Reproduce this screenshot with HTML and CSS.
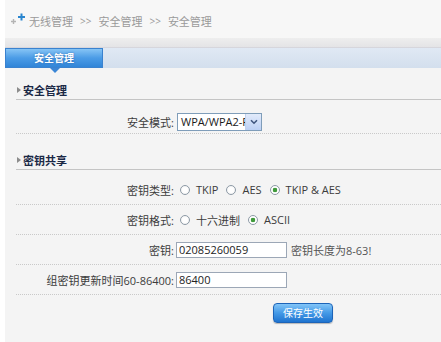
FILE: index.html
```html
<!DOCTYPE html>
<html lang="zh-CN">
<head>
<meta charset="utf-8">
<title>安全管理</title>
<link rel="stylesheet" href="styles.css">
</head>
<body>
<div class="page">
  <div class="crumb">
    <svg class="crumb-icon" width="18" height="14" viewBox="0 0 18 14">
      <path d="M1 9.5h5M3.5 7v5" stroke="#b4b4b4" stroke-width="1.4"/>
      <path d="M8 5h7M11.5 1.5v7" stroke="#2a86cf" stroke-width="2"/>
    </svg>
    <span>无线管理</span><span class="sep">&gt;&gt;</span><span>安全管理</span><span class="sep">&gt;&gt;</span><span>安全管理</span>
  </div>
  <div class="band"></div>
  <div class="tabs"><div class="tab">安全管理</div></div>
  <div class="content">
    <div class="sec-head">安全管理</div>
    <div class="sec-body sec-first">
      <div class="row row-short">
        <div class="lbl">安全模式:</div>
        <div class="fld">
          <div class="select">
            <span class="select-text">WPA/WPA2-PSK</span>
            <span class="select-btn">
              <svg width="8" height="6" viewBox="0 0 8 6"><path d="M1 1.2l3 3 3-3" fill="none" stroke="#3f557e" stroke-width="1.6"/></svg>
            </span>
          </div>
        </div>
      </div>
    </div>
    <div class="sec-head sec-gap">密钥共享</div>
    <div class="sec-body sec-second">
      <div class="row">
        <div class="lbl">密钥类型:</div>
        <div class="fld">
          <label class="opt"><input type="radio" name="t" class="radio">TKIP</label>
          <label class="opt"><input type="radio" name="t" class="radio">AES</label>
          <label class="opt"><input type="radio" name="t" class="radio" checked>TKIP &amp; AES</label>
        </div>
      </div>
      <div class="row">
        <div class="lbl">密钥格式:</div>
        <div class="fld">
          <label class="opt"><input type="radio" name="f" class="radio">十六进制</label>
          <label class="opt"><input type="radio" name="f" class="radio" checked>ASCII</label>
        </div>
      </div>
      <div class="row">
        <div class="lbl">密钥:</div>
        <div class="fld"><input class="txt" type="text" value="02085260059"><span class="hint">密钥长度为8-63!</span></div>
      </div>
      <div class="row">
        <div class="lbl">组密钥更新时间60-86400:</div>
        <div class="fld"><input class="txt" type="text" value="86400"></div>
      </div>
      <div class="actions">
        <div></div>
        <div><button class="btn" type="button">保存生效</button></div>
      </div>
    </div>
  </div>
</div>
</body>
</html>
```

FILE: styles.css
```css
html, body {
  margin: 0;
  padding: 0;
  background: #ffffff;
}
body {
  font-family: "Open Sans", "Noto Sans CJK SC", sans-serif;
  font-size: 11px;
  color: #3a3a3a;
}
.page {
  margin-left: 5px;
  height: 342px;
  display: flex;
  flex-direction: column;
}
.crumb {
  height: 38px;
  box-sizing: border-box;
  padding: 4px 0 0 5px;
  background: #f7f7f7;
  display: flex;
  align-items: center;
  color: #9a9a9a;
  white-space: nowrap;
}
.crumb-icon {
  margin-right: 1px;
  margin-top: -4px;
}
.sep {
  font-size: 10px;
  margin: 0 7px;
}
.band {
  height: 9px;
  background: linear-gradient(#eeeeee, #e4e4e6);
  border-bottom: 1px solid #d6d6dc;
}
.tabs {
  height: 20px;
  background: linear-gradient(#e0e9f4, #d3dfed);
  display: flex;
}
.tab {
  position: relative;
  width: 98px;
  box-sizing: border-box;
  height: 20px;
  line-height: 19px;
  text-align: center;
  color: #ffffff;
  font-weight: bold;
  font-size: 10px;
  background: linear-gradient(#86c4f5, #4b9ce6 50%, #3185d8);
  border: 1px solid #3a82cf;
  text-shadow: 0 0 2px rgba(20, 70, 140, 0.6);
}
.tab::after {
  content: "";
  position: absolute;
  left: 44px;
  top: 19px;
  border-left: 5px solid transparent;
  border-right: 5px solid transparent;
  border-top: 5px solid #3a86d6;
}
.content {
  flex: 1;
  background: #f4f4f4;
  padding: 12px 0 0 11px;
}
.sec-head {
  height: 19px;
  border-bottom: 1px solid #c4c4c4;
  display: flex;
  align-items: center;
  padding-left: 1px;
  font-weight: bold;
  color: #1b2946;
}
.sec-head::before {
  content: "";
  width: 0;
  height: 0;
  border-left: 4px solid #8c8c8c;
  border-top: 3px solid transparent;
  border-bottom: 3px solid transparent;
  margin-right: 2px;
}
.sec-gap {
  margin-top: 16px;
}
.sec-first {
  padding-top: 11px;
}
.sec-second {
  padding-top: 5px;
}
.row, .actions {
  display: grid;
  grid-template-columns: 158px 1fr;
  column-gap: 3px;
  align-items: center;
}
.row {
  height: 29px;
  border-bottom: 1px dotted #c9c9c9;
}
.row-short {
  height: 22px;
}
.lbl {
  text-align: right;
  white-space: nowrap;
  color: #3c3c3c;
}
.fld {
  display: flex;
  align-items: center;
  white-space: nowrap;
}
.select {
  display: flex;
  width: 85px;
  height: 18px;
  box-sizing: border-box;
  border: 1px solid #7f9db9;
  background: #ffffff;
  color: #1a1a1a;
}
.select-text {
  flex: 1;
  overflow: hidden;
  padding-left: 3px;
  line-height: 16px;
}
.select-btn {
  width: 15px;
  display: flex;
  align-items: center;
  justify-content: center;
  background: linear-gradient(#e2ebfb, #bcd0f4);
  border-left: 1px solid #c0d0ee;
}
.opt {
  display: inline-flex;
  align-items: center;
  margin-right: 5px;
  color: #3c3c3c;
}
.radio {
  -webkit-appearance: none;
  appearance: none;
  width: 10px;
  height: 10px;
  margin: 0 6px 0 3px;
  border: 1px solid #8d9aa6;
  border-radius: 50%;
  background: radial-gradient(circle, #ffffff 0 40%, #ececec 100%);
  box-sizing: border-box;
}
.radio:checked {
  background: radial-gradient(circle, #3f9a3b 0 2px, #ffffff 2.6px);
}
.txt {
  width: 111px;
  height: 16px;
  box-sizing: border-box;
  margin: 0 0 0 -1px;
  padding: 0 2px;
  border: 1px solid #9ca7b6;
  background: #ffffff;
  font-family: "Open Sans", "Noto Sans CJK SC", sans-serif;
  font-size: 11px;
  color: #222222;
  outline: none;
}
.hint {
  margin-left: 4px;
  color: #555555;
}
.actions {
  margin-top: 8px;
}
.btn {
  margin-left: 96px;
  width: 60px;
  height: 20px;
  padding: 0;
  border: 1px solid #1d64b8;
  border-radius: 4px;
  background: linear-gradient(#82c5f8, #4499e6 50%, #1f74d0);
  box-shadow: 0 1px 1px rgba(0, 0, 0, 0.25);
  color: #ffffff;
  font-family: "Noto Sans CJK SC", sans-serif;
  font-size: 10px;
  line-height: 18px;
}
```
